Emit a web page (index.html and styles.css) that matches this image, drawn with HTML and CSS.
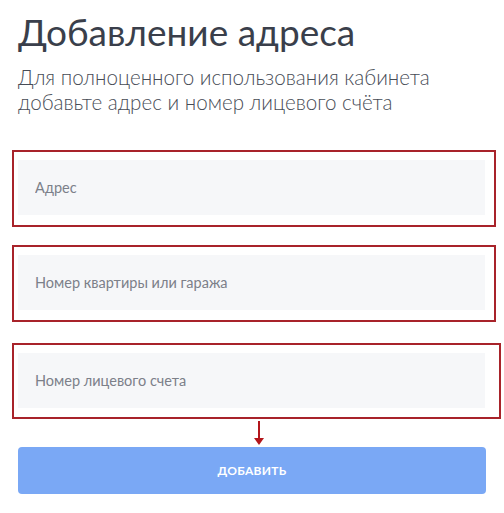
FILE: index.html
```html
<!DOCTYPE html>
<html lang="ru">
<head>
    <meta charset="UTF-8">
    <meta name="viewport" content="width=device-width, initial-scale=1.0">
    <title>Добавление адреса</title>
    <link rel="stylesheet" href="styles.css">
</head>
<body>
    <div class="container">
        <h1>Добавление адреса</h1>
        <p class="lead">Для полноценного использования кабинета<br>добавьте адрес и номер лицевого счёта</p>

        <form class="form">
            <div class="mark mark-first">
                <input type="text" class="field" placeholder="Адрес">
            </div>
            <div class="mark mark-second">
                <input type="text" class="field" placeholder="Номер квартиры или гаража">
            </div>
            <div class="mark mark-third">
                <input type="text" class="field" placeholder="Номер лицевого счета">
            </div>
            <div class="arrow">
                <svg width="12" height="28" viewBox="0 0 12 28">
                    <line x1="6" y1="2" x2="6" y2="20" stroke="#b3161b" stroke-width="2"/>
                    <polygon points="1,19 11,19 6,26" fill="#b3161b"/>
                </svg>
            </div>
            <button type="button" class="btn">Добавить</button>
        </form>
    </div>
</body>
</html>
```

FILE: styles.css
```css
body {
    margin: 0;
    font-family: 'Lato', 'Open Sans', sans-serif;
    background: #fff;
    color: #3b404c;
}

.container {
    padding: 9px 18px 0 18px;
}

h1 {
    font-size: 37px;
    font-weight: 400;
    line-height: 46px;
    margin: 0;
    color: #3a3f4b;
}

.lead {
    font-size: 20.6px;
    font-weight: 300;
    line-height: 25px;
    margin: 10px 0 0 0;
    color: #474c56;
}

.form {
    margin-top: 35px;
}

.mark {
    border: 2px solid #a8232a;
    margin-left: -6px;
    padding: 8px 7px 10px 4px;
}

.mark-first {
    width: 469px;
}

.mark-second {
    width: 469px;
    margin-top: 18px;
}

.mark-third {
    width: 474px;
    margin-top: 21px;
    padding-bottom: 9px;
}

.field {
    display: block;
    box-sizing: border-box;
    width: 467px;
    height: 55px;
    padding: 0 17px;
    border: none;
    background: #f6f7f9;
    font-family: inherit;
    font-size: 14.5px;
    color: #3b404c;
    outline: none;
}

.field::placeholder {
    color: #7c8089;
}

.arrow {
    display: flex;
    justify-content: center;
    width: 468px;
    height: 28px;
    padding-left: 14px;
    box-sizing: border-box;
}

.btn {
    display: block;
    width: 468px;
    height: 47px;
    border: none;
    border-radius: 4px;
    background: #7aa8f5;
    color: #fff;
    font-family: inherit;
    font-size: 12px;
    font-weight: 700;
    text-transform: uppercase;
    letter-spacing: 0.3px;
    cursor: pointer;
}
```
